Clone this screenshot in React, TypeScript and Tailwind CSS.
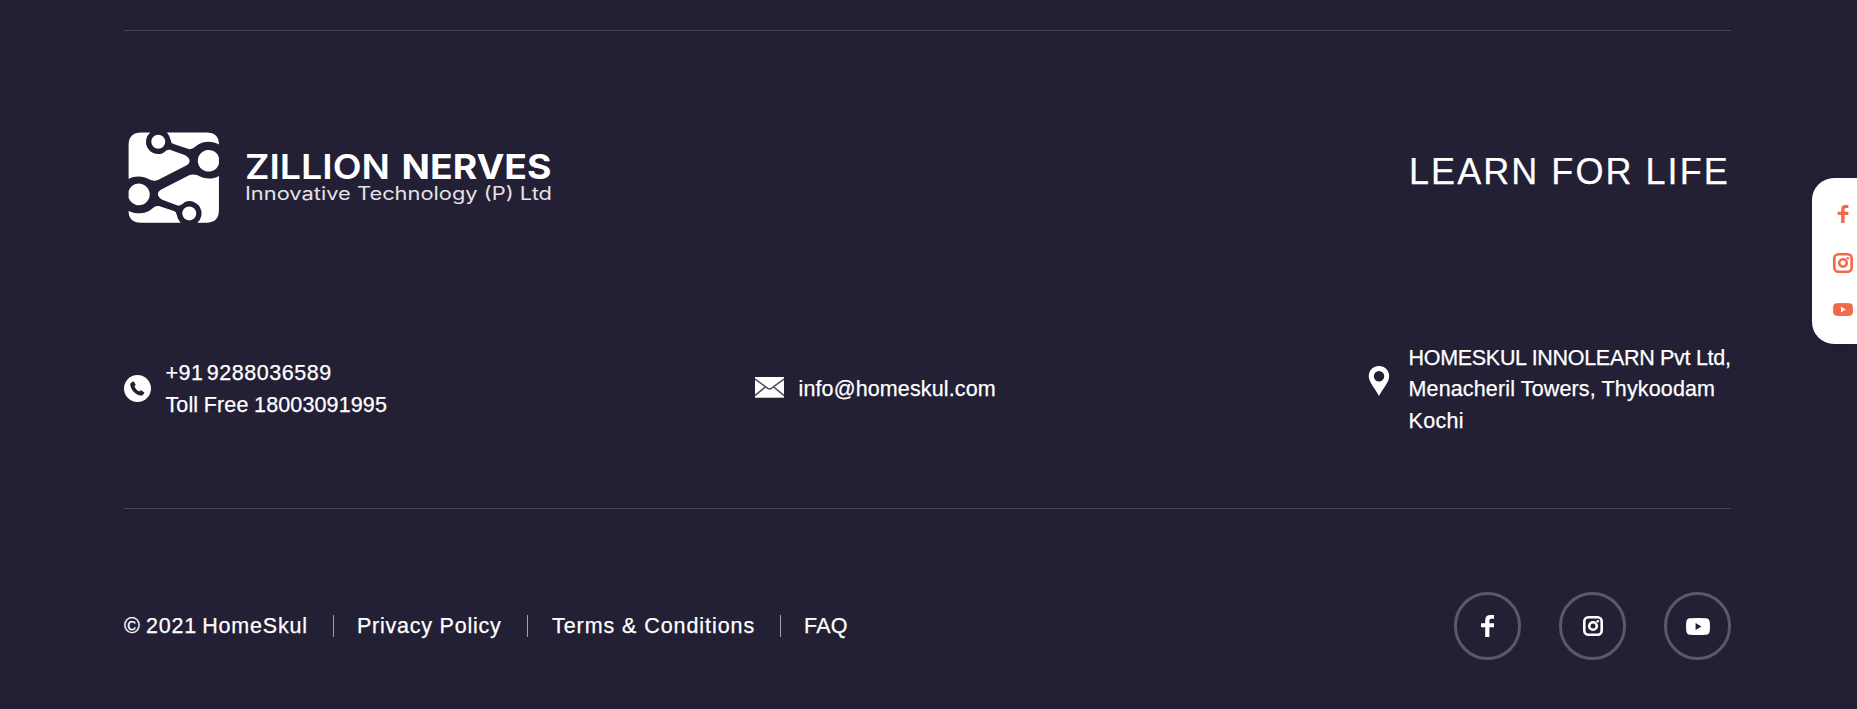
import React from "react";

function LogoHalf() {
  return (
    <>
      <path d="M38 0H65A37 37 0 0 0 98 64C108 61 112 50 124 52L168 68Q183 75 183 86Q183 95 170 101L88 143Q78 147 66 143C50 134 25 126 0 140V38Q0 0 38 0Z" />
      <path d="M115 0H234Q271 0 271 36C247 22 215 28 200 43Q190 52 180 50L135 35Q127 33 127 25Q124 10 115 0Z" />
      <circle cx="89" cy="28" r="21" />
      <path d="M271 75V95A32.5 32.5 0 1 1 271 75Z" />
    </>
  );
}

function Logo() {
  return (
    <svg width="430" height="92" viewBox="0 0 430 92" fill="#fff" className="block shrink-0">
      <g transform="translate(0.6 0.4) scale(0.3333)">
        <LogoHalf />
        <g transform="rotate(180 135.5 135.5)">
          <LogoHalf />
        </g>
      </g>
      <g fontFamily="Inter, sans-serif">
        <text x="117" y="47" fontSize="34" fontWeight="600" textLength="145" lengthAdjust="spacingAndGlyphs">ZILLION</text>
        <text x="273.5" y="47" fontSize="34" fontWeight="700" textLength="150" lengthAdjust="spacingAndGlyphs">NERVES</text>
        <text x="117" y="67.5" fontSize="18" fill="#e4e2e6" textLength="307" lengthAdjust="spacingAndGlyphs">Innovative Technology (P) Ltd</text>
      </g>
    </svg>
  );
}

function Facebook({ className }: { className: string }) {
  return (
    <svg viewBox="0 0 13 22" className={className} fill="currentColor">
      <path d="M4.2 22V12.3H0V8.3H4.2V5.2C4.2 1.7 6 0 9.4 0H13V3.8H10.6C9 3.8 8.4 4.4 8.4 5.9V8.3H13V12.3H8.4V22Z" />
    </svg>
  );
}

function Instagram({ className }: { className: string }) {
  return (
    <svg viewBox="0 0 20 20" className={className} fill="none" stroke="currentColor">
      <rect x="1.3" y="1.3" width="17.4" height="17.4" rx="4.2" strokeWidth="2.6" />
      <circle cx="10" cy="10" r="3.8" strokeWidth="2.6" />
      <circle cx="14.8" cy="5.2" r="1.3" fill="currentColor" stroke="none" />
    </svg>
  );
}

function Youtube({ className }: { className: string }) {
  return (
    <svg viewBox="0 0 24 17" className={className} fill="currentColor" preserveAspectRatio="none">
      <path fillRule="evenodd" d="M4 .3Q12-.3 20 .3Q23.3.5 23.7 4Q24.2 8.5 23.7 13Q23.3 16.5 20 16.7Q12 17.3 4 16.7Q.7 16.5.3 13Q-.2 8.5.3 4Q.7.5 4 .3ZM9.6 5V12L15.4 8.5Z" />
    </svg>
  );
}

function Phone() {
  return (
    <svg viewBox="0 0 27 27" className="h-[27px] w-[27px] shrink-0">
      <circle cx="13.5" cy="13.5" r="13.5" fill="#fff" />
      <path fill="#231f35" d="M6.6 8.2L8.9 6.5Q9.5 6.2 9.9 6.8L11.5 9.4Q11.8 10 11.3 10.5L10.4 11.5Q12 15 15.3 16.6L16.3 15.6Q16.8 15.1 17.4 15.5L20 17.2Q20.6 17.6 20.2 18.2L18.8 20.1Q18.3 20.7 17.4 20.6C11.5 19.8 7 15.3 6.2 9.4Q6.1 8.6 6.6 8.2Z" />
    </svg>
  );
}

function Envelope() {
  return (
    <svg viewBox="0 0 29 21" className="h-[21px] w-[29px] shrink-0">
      <rect width="29" height="20.7" fill="#fff" />
      <path d="M0 2L12.7 11.4Q14.5 12.6 16.3 11.4L29 2M0 18.6L10.3 10M29 18.6L18.7 10" fill="none" stroke="#4c485b" strokeWidth="1.5" />
    </svg>
  );
}

function Pin() {
  return (
    <svg viewBox="0 0 22 30" className="h-[30px] w-[22px] shrink-0">
      <path fill="#fff" fillRule="evenodd" d="M11 0C17 0 21.2 4.4 21.2 10.2C21.2 16 15 22.5 11 30C7 22.5.8 16 .8 10.2C.8 4.4 5 0 11 0ZM11 5A5.2 5.2 0 1 0 11 15.4A5.2 5.2 0 1 0 11 5Z" />
    </svg>
  );
}

const ring = "flex h-[68px] w-[67px] items-center justify-center rounded-full border-[3px] border-[#5b586a]";
const divider = "h-[22px] w-px bg-[#a19fa8]";

export default function App() {
  return (
    <div className="relative h-[709px] w-full overflow-hidden bg-[#231f35] text-[21.5px] leading-[31.5px] text-white [-webkit-text-stroke:0.25px_white] [font-family:'Liberation_Sans',Arial,sans-serif]">
      <footer className="ml-[124px] flex w-[1607px] flex-col whitespace-nowrap pt-[30px]">
        <div className="h-px bg-[#494658]" />
        <div className="mt-[101px] flex h-[92px] justify-between pl-[4px]">
          <Logo />
          <p className="mt-[16px] w-[322px] text-[36px] leading-[48px] tracking-[2.05px]">LEARN FOR LIFE</p>
        </div>

        <div className="mt-[118px] flex h-[95px] items-start">
          <div className="flex w-[631px] items-start pt-[16px]">
            <div className="pt-[17px]"><Phone /></div>
            <div className="ml-[14.5px]">
              <p className="tracking-[0.55px] [word-spacing:-3.5px]">+91 9288036589</p>
              <p className="tracking-[0.12px] [word-spacing:-0.5px]">Toll Free 18003091995</p>
            </div>
          </div>
          <div className="flex w-[613px] items-start pt-[32px]">
            <div className="pt-[3px]"><Envelope /></div>
            <p className="ml-[14.5px] tracking-[0.13px]">info@homeskul.com</p>
          </div>
          <div className="flex items-start">
            <div className="pt-[24px]"><Pin /></div>
            <div className="ml-[18.5px] pt-[0.6px]">
              <p className="tracking-[-0.3px]">HOMESKUL INNOLEARN Pvt Ltd,</p>
              <p className="tracking-[0.14px]">Menacheril Towers, Thykoodam</p>
              <p className="tracking-[0.3px]">Kochi</p>
            </div>
          </div>
        </div>

        <div className="mt-[71px] h-px bg-[#494658]" />

        <div className="mt-[83px] flex h-[68px] items-center justify-between">
          <nav className="flex items-center">
            <span className="w-[209px] pt-px tracking-[0.8px] [word-spacing:-1.5px]">© 2021 HomeSkul</span>
            <span className={divider} />
            <a className="w-[193px] pl-[23px] pt-px tracking-[0.77px]">Privacy Policy</a>
            <span className={divider} />
            <a className="w-[252px] pl-[24px] pt-px tracking-[0.93px]">Terms &amp; Conditions</a>
            <span className={divider} />
            <a className="pl-[23px] pt-px tracking-[0.2px]">FAQ</a>
          </nav>
          <div className="flex gap-[38px]">
            <a className={ring}><Facebook className="h-[22px] w-[13px]" /></a>
            <a className={ring}><Instagram className="h-[20px] w-[20px]" /></a>
            <a className={ring}><Youtube className="h-[17px] w-[24px]" /></a>
          </div>
        </div>
      </footer>

      <aside className="absolute right-0 top-[178px] flex h-[166px] w-[45px] flex-col items-start rounded-l-[22px] bg-white pl-[21px] pt-[27px] text-[#f26a49] shadow-[0_0_20px_rgba(0,0,0,0.12)]">
        <Facebook className="ml-[4px] h-[18px] w-[12px]" />
        <Instagram className="mt-[30px] h-[20px] w-[20px]" />
        <Youtube className="mt-[30px] h-[13px] w-[20px]" />
      </aside>
    </div>
  );
}
